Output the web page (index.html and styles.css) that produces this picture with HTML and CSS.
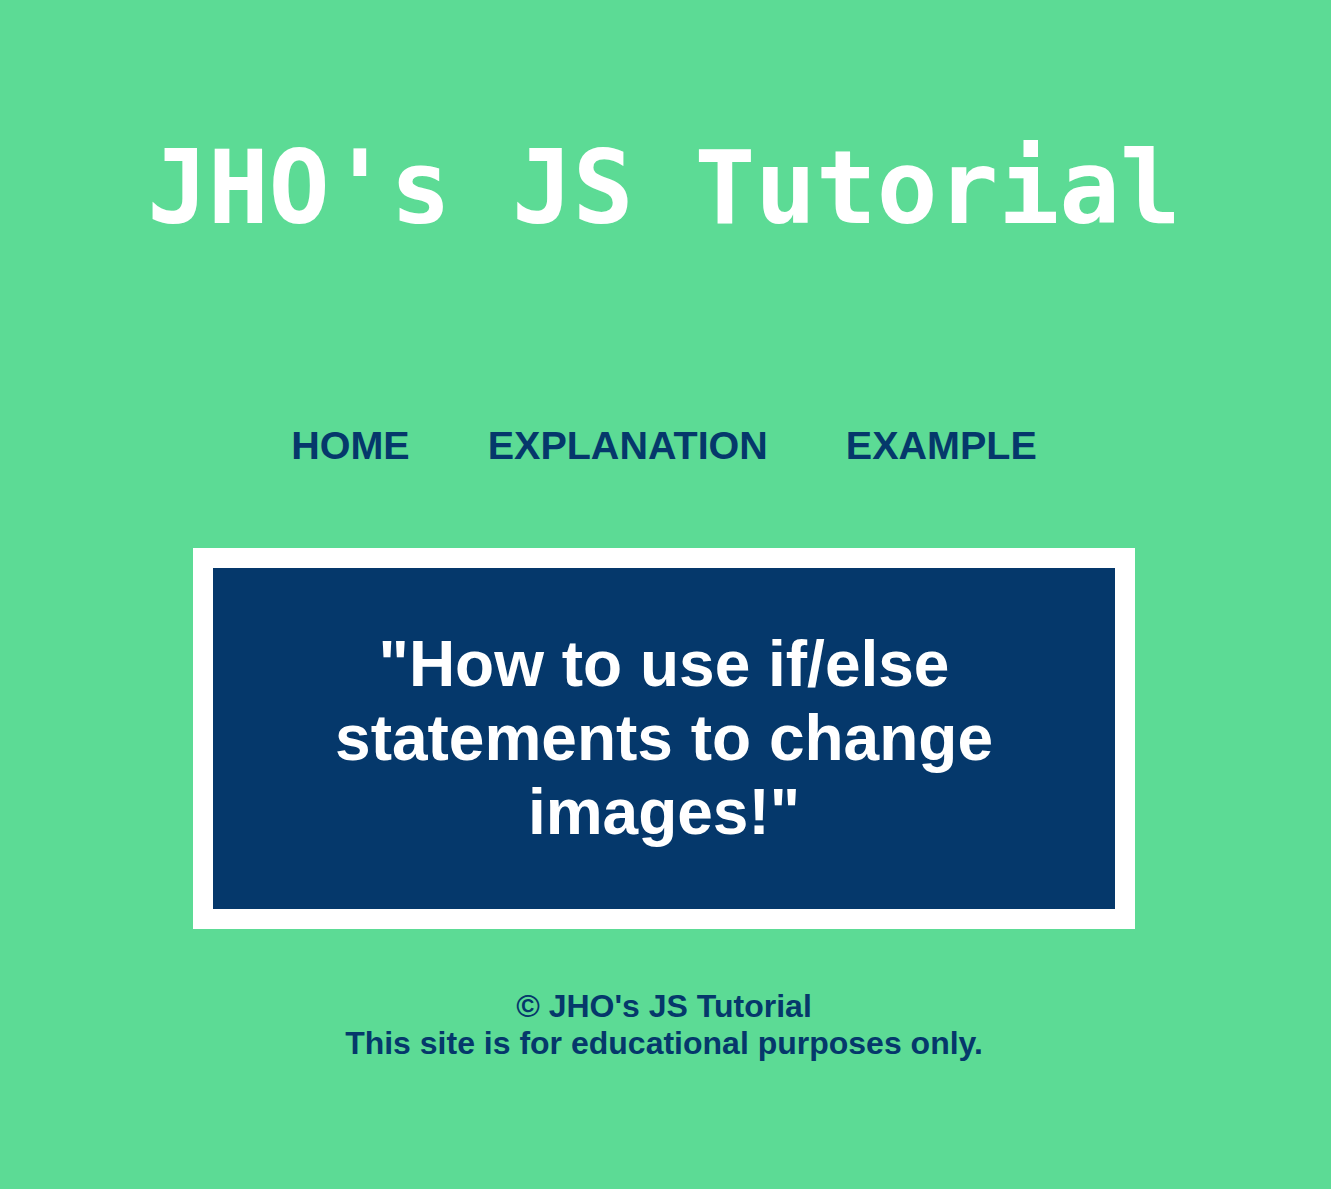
FILE: index.html
```html
<!DOCTYPE html>
<html lang="en">
<head>
<meta charset="utf-8">
<title>JHO's JS Tutorial</title>
<link rel="stylesheet" href="styles.css">
</head>
<body>
<header class="site-header">
  <h1 class="site-title">JHO's JS Tutorial</h1>
</header>
<nav class="site-nav">
  <a class="nav-link" href="#">HOME</a>
  <a class="nav-link" href="#">EXPLANATION</a>
  <a class="nav-link" href="#">EXAMPLE</a>
</nav>
<main class="hero">
  <div class="hero-frame">
    <div class="hero-box">
      <h2 class="hero-text">"How to use if/else statements to change images!"</h2>
    </div>
  </div>
</main>
<footer class="site-footer">
  <p class="footer-line">© JHO's JS Tutorial</p>
  <p class="footer-line">This site is for educational purposes only.</p>
</footer>
</body>
</html>
```

FILE: styles.css
```css
html, body {
  margin: 0;
  padding: 0;
}
body {
  background: #5cdb95;
  font-family: "Liberation Sans", Arial, sans-serif;
  color: #05386b;
  min-height: 1189px;
  padding-right: 3px;
}
.site-header {
  padding-top: 129px;
  text-align: center;
}
.site-title {
  margin: 0;
  font-family: "DejaVu Sans Mono", "Liberation Mono", monospace;
  font-weight: bold;
  font-size: 101px;
  line-height: normal;
  color: #ffffff;
}
.site-nav {
  display: flex;
  justify-content: center;
  gap: 78px;
  margin-top: 176px;
}
.nav-link {
  font-size: 39.5px;
  font-weight: bold;
  color: #05386b;
  text-decoration: none;
  line-height: normal;
}
.hero {
  display: flex;
  justify-content: center;
  margin-top: 80px;
}
.hero-frame {
  background: #ffffff;
  padding: 20px;
}
.hero-box {
  background: #05386b;
  width: 782px;
  padding: 59px 60px 60px;
}
.hero-text {
  margin: 0;
  font-size: 64px;
  font-weight: bold;
  line-height: normal;
  color: #ffffff;
  text-align: center;
}
.site-footer {
  margin-top: 59px;
  text-align: center;
}
.footer-line {
  margin: 0;
  font-size: 32px;
  font-weight: bold;
  line-height: normal;
}
```
